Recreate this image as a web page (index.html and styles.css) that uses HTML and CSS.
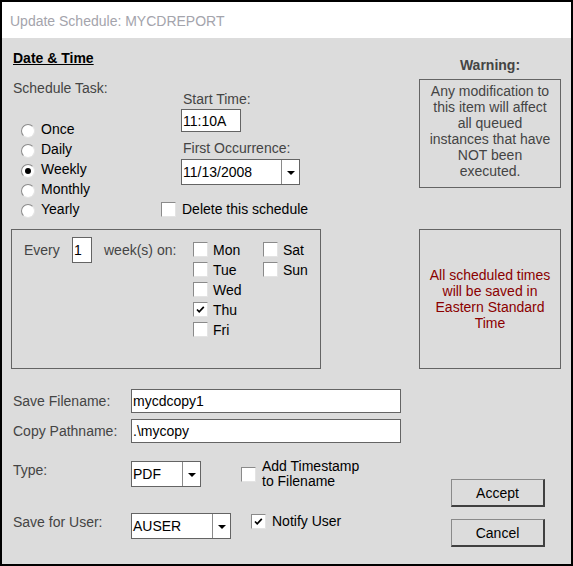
FILE: index.html
```html
<!DOCTYPE html>
<html>
<head>
    <meta charset="UTF-8">
    <title>Update Schedule: MYCDREPORT</title>
    <link rel="stylesheet" href="styles.css">
</head>
<body>
    <div class="window">
        <div class="titlebar">Update Schedule: MYCDREPORT</div>

        <div class="content">
            <div class="main-grid">
                <!-- date & time -->
                <div class="date-time">
                    <h3 class="section-title">Date &amp; Time</h3>
                    <div class="task-grid">
                        <div class="task-col">
                            <div class="label">Schedule Task:</div>
                            <div class="radios">
                                <div class="radio"><span class="radio-dot"></span><span>Once</span></div>
                                <div class="radio"><span class="radio-dot"></span><span>Daily</span></div>
                                <div class="radio"><span class="radio-dot checked"></span><span>Weekly</span></div>
                                <div class="radio"><span class="radio-dot"></span><span>Monthly</span></div>
                                <div class="radio"><span class="radio-dot"></span><span>Yearly</span></div>
                            </div>
                        </div>
                        <div class="time-col">
                            <div class="label field-label">Start Time:</div>
                            <div class="textbox time-box">11:10A</div>
                            <div class="label field-label occ-label">First Occurrence:</div>
                            <div class="combo date-combo">
                                <span class="combo-value">11/13/2008</span>
                                <span class="combo-btn"><span class="arrow"></span></span>
                            </div>
                            <div class="check delete-check"><span class="checkbox"></span><span>Delete this schedule</span></div>
                        </div>
                    </div>
                </div>

                <div class="warning">
                    <div class="warning-title">Warning:</div>
                    <div class="warning-box">Any modification to<br>this item will affect<br>all queued<br>instances that have<br>NOT been<br>executed.</div>
                </div>

                <!-- weekly -->
                <div class="weekly-box">
                    <span class="label every-label">Every</span>
                    <div class="textbox every-box">1</div>
                    <span class="label weeks-label">week(s) on:</span>
                    <div class="days">
                        <div class="day"><span class="checkbox"></span><span>Mon</span></div>
                        <div class="day"><span class="checkbox"></span><span>Tue</span></div>
                        <div class="day"><span class="checkbox"></span><span>Wed</span></div>
                        <div class="day"><span class="checkbox"><svg class="tick" width="13" height="13" viewBox="0 0 13 13"><path d="M3 6.5 L5.2 8.8 L9.8 3.8" fill="none" stroke="#000" stroke-width="1.7"/></svg></span><span>Thu</span></div>
                        <div class="day"><span class="checkbox"></span><span>Fri</span></div>
                        <div class="day"><span class="checkbox"></span><span>Sat</span></div>
                        <div class="day"><span class="checkbox"></span><span>Sun</span></div>
                    </div>
                </div>

                <div class="tz-box">
                    <div class="tz-text">All scheduled times<br>will be saved in<br>Eastern Standard<br>Time</div>
                </div>
            </div>

            <!-- file options -->
            <div class="bottom">
                <div class="fields">
                    <div class="field-row">
                        <span class="label row-label">Save Filename:</span>
                        <div class="textbox wide-box">mycdcopy1</div>
                    </div>
                    <div class="field-row row-gap-small">
                        <span class="label row-label">Copy Pathname:</span>
                        <div class="textbox wide-box">.\mycopy</div>
                    </div>
                    <div class="field-row type-row">
                        <span class="label row-label">Type:</span>
                        <div class="combo type-combo">
                            <span class="combo-value">PDF</span>
                            <span class="combo-btn"><span class="arrow"></span></span>
                        </div>
                        <div class="check stamp-check"><span class="checkbox"></span><span class="two-line">Add Timestamp<br>to Filename</span></div>
                    </div>
                    <div class="field-row user-row">
                        <span class="label row-label">Save for User:</span>
                        <div class="combo user-combo">
                            <span class="combo-value">AUSER</span>
                            <span class="combo-btn"><span class="arrow"></span></span>
                        </div>
                        <div class="check notify-check"><span class="checkbox"><svg class="tick" width="13" height="13" viewBox="0 0 13 13"><path d="M3 6.5 L5.2 8.8 L9.8 3.8" fill="none" stroke="#000" stroke-width="1.7"/></svg></span><span>Notify User</span></div>
                    </div>
                </div>
                <div class="buttons">
                    <button class="btn">Accept</button>
                    <button class="btn">Cancel</button>
                </div>
            </div>
        </div>
    </div>
</body>
</html>
```

FILE: styles.css
```css
* {
    box-sizing: border-box;
    margin: 0;
    padding: 0;
}
body {
    font-family: "Liberation Sans", Arial, sans-serif;
    font-size: 14px;
    line-height: 16px;
    color: #000;
    background: #fff;
}
.window {
    width: 573px;
    height: 566px;
    border: 2px solid #000;
    display: flex;
    flex-direction: column;
}
.titlebar {
    height: 36px;
    padding: 11px 0 0 8px;
    background: #fff;
    color: #a4a4ac;
}
.content {
    flex: 1;
    background: #dcdcdc;
    padding: 12px 10px 0 9px;
}
.main-grid {
    display: grid;
    grid-template-columns: 310px 142px;
    column-gap: 98px;
    row-gap: 12px;
}
.label {
    color: #444;
}
.section-title {
    font-size: 14px;
    font-weight: bold;
    text-decoration: underline;
    padding-left: 2px;
}
.task-grid {
    display: grid;
    grid-template-columns: 150px 1fr;
    margin-top: 14px;
}
.task-col {
    padding-left: 2px;
}
.radios {
    margin-top: 25px;
    padding-left: 8px;
    display: flex;
    flex-direction: column;
    gap: 4px;
}
.radio {
    display: flex;
    align-items: flex-start;
    height: 16px;
    gap: 6px;
}
.radio-dot {
    width: 14px;
    height: 14px;
    margin-top: 3px;
    border-radius: 50%;
    background: #fff;
    border: 1px solid;
    border-color: #8a8a8a #e4e4e4 #e4e4e4 #8a8a8a;
    display: flex;
    align-items: center;
    justify-content: center;
}
.radio-dot.checked::after {
    content: "";
    width: 6px;
    height: 6px;
    border-radius: 50%;
    background: #000;
}
.time-col {
    padding-top: 11px;
}
.field-label {
    margin-left: 22px;
}
.occ-label {
    margin-top: 8px;
}
.textbox {
    background: #fff;
    border: 1px solid #646464;
    padding-left: 1px;
    display: flex;
    align-items: center;
}
.time-box {
    width: 60px;
    height: 23px;
    margin: 2px 0 0 20px;
}
.combo {
    display: flex;
    background: #fff;
    border: 1px solid #646464;
    height: 26px;
}
.combo-value {
    flex: 1;
    padding-left: 1px;
    line-height: 24px;
}
.combo-btn {
    width: 18px;
    border-left: 1px solid #8a8a8a;
    display: flex;
    align-items: center;
    justify-content: center;
}
.arrow {
    width: 0;
    height: 0;
    border-left: 4px solid transparent;
    border-right: 4px solid transparent;
    border-top: 4px solid #000;
    margin-top: 2px;
}
.date-combo {
    width: 119px;
    margin: 3px 0 0 20px;
}
.check {
    display: flex;
    align-items: center;
    gap: 6px;
}
.checkbox {
    width: 15px;
    height: 15px;
    flex: none;
    background: #fff;
    border: 1px solid;
    border-color: #8a8a8a #e4e4e4 #e4e4e4 #8a8a8a;
    display: flex;
    align-items: center;
    justify-content: center;
}
.delete-check {
    margin-top: 16px;
}
.warning {
    padding-top: 7px;
}
.warning-title {
    text-align: center;
    font-weight: bold;
    color: #444;
}
.warning-box {
    margin-top: 6px;
    height: 109px;
    border: 1px solid #646464;
    padding-top: 3px;
    text-align: center;
    color: #444;
}
.weekly-box {
    height: 140px;
    border: 1px solid #646464;
    padding: 7px 0 0 12px;
    display: flex;
    align-items: flex-start;
}
.every-label {
    width: 48px;
    line-height: 26px;
}
.every-box {
    width: 20px;
    height: 26px;
}
.weeks-label {
    width: 89px;
    margin-left: 12px;
    line-height: 26px;
}
.days {
    margin-top: 3px;
    display: grid;
    grid-template-columns: 70px auto;
    grid-template-rows: repeat(5, 20px);
    grid-auto-flow: column;
}
.day {
    display: flex;
    align-items: flex-start;
    gap: 5px;
}
.day .checkbox {
    margin-top: 2px;
}
.day span:last-child {
    padding-top: 2px;
}
.tz-box {
    height: 140px;
    border: 1px solid #646464;
    display: flex;
    align-items: center;
    justify-content: center;
}
.tz-text {
    text-align: center;
    color: #8b0000;
}
.bottom {
    display: flex;
}
.fields {
    padding-top: 20px;
}
.field-row {
    display: flex;
    align-items: center;
}
.row-label {
    width: 120px;
    padding-left: 2px;
}
.wide-box {
    width: 270px;
    height: 24px;
}
.row-gap-small {
    margin-top: 6px;
}
.type-row {
    margin-top: 16px;
}
.type-row .row-label {
    align-self: flex-start;
    margin-top: 3px;
}
.type-combo {
    width: 70px;
}
.stamp-check {
    margin-left: 40px;
}
.two-line {
    line-height: 15px;
}
.user-row {
    margin-top: 24px;
    align-items: flex-start;
}
.user-row .row-label {
    margin-top: 1px;
}
.user-combo {
    width: 100px;
}
.notify-check {
    margin: 1px 0 0 20px;
    line-height: 15px;
}
.buttons {
    margin: 110px 16px 0 auto;
    display: flex;
    flex-direction: column;
    gap: 12px;
}
.btn {
    width: 94px;
    height: 28px;
    background: #dcdcdc;
    border: 1px solid;
    border-width: 1px 2px 2px 1px;
    border-color: #8a8a8a #404040 #404040 #8a8a8a;
    font-family: "Liberation Sans", Arial, sans-serif;
    font-size: 14px;
    color: #000;
}
```
